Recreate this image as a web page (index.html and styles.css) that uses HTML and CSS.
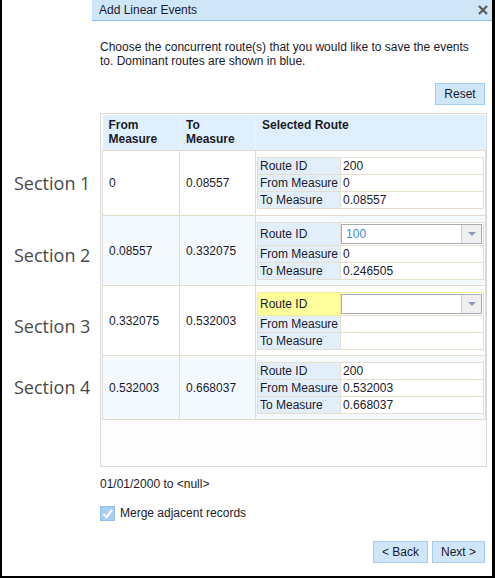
FILE: index.html
```html
<!DOCTYPE html>
<html>
<head>
<meta charset="utf-8">
<link rel="stylesheet" href="styles.css">
</head>
<body>
<div class="frame">
  <div class="notes">
    <div class="note n1">Section 1</div>
    <div class="note n2">Section 2</div>
    <div class="note n3">Section 3</div>
    <div class="note n4">Section 4</div>
  </div>
  <div class="dialog">
    <div class="titlebar">
      <span class="title">Add Linear Events</span>
      <svg class="close" width="10" height="10" viewBox="0 0 10 10"><path d="M1 1L9 9M9 1L1 9" stroke="#5a5a5a" stroke-width="2.3" fill="none"/></svg>
    </div>
    <div class="body">
      <p class="desc">Choose the concurrent route(s) that you would like to save the events to. Dominant routes are shown in blue.</p>
      <div class="toolbar"><button class="btn reset">Reset</button></div>
      <div class="grid-wrap">
        <table class="grid">
          <colgroup><col class="w1"><col class="w2"><col class="w3"></colgroup>
          <thead>
            <tr><th>From<br>Measure</th><th>To<br>Measure</th><th>Selected Route</th></tr>
          </thead>
          <tbody>
            <tr class="r1">
              <td>0</td><td>0.08557</td>
              <td class="route">
                <table class="sub">
                  <tr><td class="k">Route ID</td><td>200</td></tr>
                  <tr><td class="k">From Measure</td><td>0</td></tr>
                  <tr><td class="k">To Measure</td><td>0.08557</td></tr>
                </table>
              </td>
            </tr>
            <tr class="r2 alt">
              <td>0.08557</td><td>0.332075</td>
              <td class="route">
                <table class="sub">
                  <tr class="sel"><td class="k">Route ID</td><td class="cv"><div class="combo"><span class="val">100</span><span class="arrow"><i class="tri"></i></span></div></td></tr>
                  <tr><td class="k">From Measure</td><td>0</td></tr>
                  <tr><td class="k">To Measure</td><td>0.246505</td></tr>
                </table>
              </td>
            </tr>
            <tr class="r3">
              <td>0.332075</td><td>0.532003</td>
              <td class="route">
                <table class="sub">
                  <tr class="sel"><td class="k warn">Route ID</td><td class="cv warnv"><div class="combo"><span class="val"></span><span class="arrow"><i class="tri"></i></span></div></td></tr>
                  <tr><td class="k">From Measure</td><td></td></tr>
                  <tr><td class="k">To Measure</td><td></td></tr>
                </table>
              </td>
            </tr>
            <tr class="r4 alt">
              <td>0.532003</td><td>0.668037</td>
              <td class="route">
                <table class="sub">
                  <tr><td class="k">Route ID</td><td>200</td></tr>
                  <tr><td class="k">From Measure</td><td>0.532003</td></tr>
                  <tr><td class="k">To Measure</td><td>0.668037</td></tr>
                </table>
              </td>
            </tr>
          </tbody>
        </table>
      </div>
      <div class="range">01/01/2000 to &lt;null&gt;</div>
      <label class="merge"><span class="check"><svg width="13" height="13" viewBox="0 0 13 13"><path d="M2.5 7L5.5 10L11 3" stroke="#fff" stroke-width="2.2" fill="none"/></svg></span>Merge adjacent records</label>
      <div class="actions"><button class="btn back">&lt; Back</button><button class="btn next">Next &gt;</button></div>
    </div>
  </div>
</div>
</body>
</html>
```
FILE: styles.css
```css
html, body {
  margin: 0;
  padding: 0;
}
body {
  width: 495px;
  height: 578px;
  overflow: hidden;
  background: #fff;
  font-family: "Liberation Sans", Arial, sans-serif;
  font-size: 12px;
  color: #1a1a2a;
}
.frame {
  display: flex;
  height: 578px;
  box-sizing: border-box;
  border-left: 2px solid #000;
  border-right: 3px solid #000;
  border-bottom: 2px solid #000;
}
.notes {
  width: 90px;
  flex: none;
  padding-top: 171px;
  box-sizing: border-box;
}
.note {
  font-family: "Open Sans", sans-serif;
  font-size: 18px;
  line-height: 24px;
  color: #4a4a4a;
  padding-left: 12px;
  white-space: nowrap;
}
.n2 { margin-top: 48px; }
.n3 { margin-top: 47px; }
.n4 { margin-top: 37px; }

.dialog {
  width: 400px;
  flex: none;
  display: flex;
  flex-direction: column;
}
.titlebar {
  height: 20px;
  background: #cfe6f9;
  border-bottom: 1px solid #8ec3ec;
  display: flex;
  align-items: center;
  justify-content: space-between;
  padding: 0 4px 0 7px;
}
.title { line-height: 16px; }
.close { display: block; }

.body {
  padding: 19px 5px 0 8px;
}
.desc {
  margin: 0;
  line-height: 14px;
  padding-right: 8px;
}
.toolbar {
  display: flex;
  justify-content: flex-end;
  margin-top: 15px;
  padding-right: 2px;
}
.btn {
  font-family: "Liberation Sans", Arial, sans-serif;
  font-size: 12px;
  color: #1a1a2a;
  height: 22px;
  box-sizing: border-box;
  background: #cfe6f9;
  border: 1px solid #a3cdee;
  border-radius: 0;
  padding: 0;
}
.reset { width: 50px; }
.back { width: 55px; }
.next { width: 53px; }

.grid-wrap {
  margin-top: 8px;
  border: 1px solid #d9d9d9;
  padding: 1px;
  height: 354px;
  box-sizing: border-box;
  background: #fdfdfd;
}
.grid {
  border-collapse: collapse;
  table-layout: fixed;
  width: 383px;
}
.w1 { width: 77px; }
.w2 { width: 76px; }
.w3 { width: 230px; }
.grid th {
  background: #dff0fc;
  text-align: left;
  vertical-align: top;
  font-weight: bold;
  padding: 3px 6px 4px;
  line-height: 14px;
  border-right: 1px solid #eef2f5;
  border-bottom: 1px solid #e3dccc;
}
.grid > tbody > tr > td {
  padding: 0 6px;
  vertical-align: middle;
  border-right: 1px solid #e3dccc;
  border-bottom: 1px solid #e3dccc;
  background: #fff;
}
.grid > tbody > tr > td:first-child {
  border-left: 1px solid #e0ddd6;
}
.grid > tbody > tr.alt > td { background: #f4f9fe; }
.r1 { height: 65px; }
.r2 { height: 70px; }
.r3 { height: 70px; }
.r4 { height: 64px; }
.grid > tbody > tr > td.route {
  padding: 0 1px;
}

.sub {
  width: 100%;
  border-collapse: collapse;
}
.sub td {
  height: 16px;
  padding: 0 2px;
  line-height: 16px;
  border: 1px solid #e6dfcf;
  background: #fff;
  white-space: nowrap;
}
.sub td.k {
  background: #e2effb;
  width: 78px;
}
.sub td.k.warn { background: #ffff9c; border-color: #f2eb9e; }
.sub td.warnv { border-top-color: #f2eb9e; }
.sub tr.sel td { height: 22px; }
.sub td.cv { padding: 0 1px 0 0; }
.combo {
  display: flex;
  height: 20px;
  border: 1px solid #a6adb6;
  box-sizing: border-box;
  background: #fff;
}
.val {
  flex: 1;
  padding-left: 4px;
  line-height: 18px;
  color: #3b8fda;
}
.arrow {
  width: 19px;
  background: #f0f0f0;
  border-left: 1px solid #c8ccd2;
  display: flex;
  align-items: center;
  justify-content: center;
}
.tri {
  display: block;
  width: 0;
  height: 0;
  border-left: 4px solid transparent;
  border-right: 4px solid transparent;
  border-top: 4px solid #8d9bb5;
}

.range {
  margin-top: 10px;
  line-height: 14px;
}
.merge {
  display: flex;
  align-items: center;
  gap: 5px;
  margin-top: 14px;
  line-height: 16px;
}
.check {
  width: 15px;
  height: 15px;
  box-sizing: border-box;
  background: #a8cff2;
  border: 1px solid #92bfe9;
  display: flex;
  align-items: center;
  justify-content: center;
}
.check svg { display: block; }
.actions {
  display: flex;
  justify-content: flex-end;
  gap: 4px;
  margin-top: 20px;
  padding-right: 2px;
}
```
